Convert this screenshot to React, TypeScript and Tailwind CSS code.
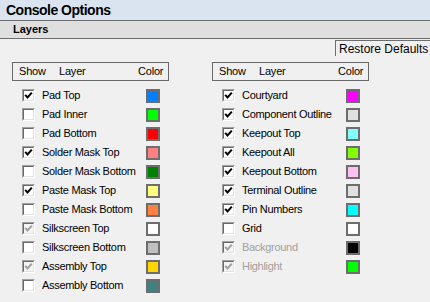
import React from 'react'

type Layer = { name: string; color: string; checked: boolean; disabled?: boolean; dim?: boolean }

const leftLayers: Layer[] = [
  { name: 'Pad Top', color: '#0080ff', checked: true },
  { name: 'Pad Inner', color: '#00ff00', checked: false },
  { name: 'Pad Bottom', color: '#ff0000', checked: false },
  { name: 'Solder Mask Top', color: '#ff8080', checked: true },
  { name: 'Solder Mask Bottom', color: '#008000', checked: false },
  { name: 'Paste Mask Top', color: '#ffff80', checked: true },
  { name: 'Paste Mask Bottom', color: '#ff8040', checked: false },
  { name: 'Silkscreen Top', color: '#ffffff', checked: true, disabled: true },
  { name: 'Silkscreen Bottom', color: '#c0c0c0', checked: false },
  { name: 'Assembly Top', color: '#ffd700', checked: true, disabled: true },
  { name: 'Assembly Bottom', color: '#408080', checked: false },
]

const rightLayers: Layer[] = [
  { name: 'Courtyard', color: '#ff00ff', checked: true },
  { name: 'Component Outline', color: '#e0e0e0', checked: true },
  { name: 'Keepout Top', color: '#80ffff', checked: true },
  { name: 'Keepout All', color: '#80ff00', checked: true },
  { name: 'Keepout Bottom', color: '#ffc0f4', checked: true },
  { name: 'Terminal Outline', color: '#e0e0e0', checked: true },
  { name: 'Pin Numbers', color: '#00ffff', checked: true },
  { name: 'Grid', color: '#ffffff', checked: false },
  { name: 'Background', color: '#000000', checked: true, disabled: true, dim: true },
  { name: 'Highlight', color: '#00ff00', checked: true, disabled: true, dim: true },
]

function CheckBox({ checked, disabled }: { checked: boolean; disabled?: boolean }) {
  return (
    <span className="flex h-[13px] w-[13px] border-t border-l border-b border-r border-t-[#a0a0a0] border-l-[#a0a0a0] border-b-white border-r-white">
      <span
        className={`flex h-full w-full items-center justify-center border-t border-l border-t-[#696969] border-l-[#696969] border-b border-r border-b-[#e3e3e3] border-r-[#e3e3e3] ${
          disabled ? 'bg-[#f4f4f4]' : 'bg-white'
        }`}
      >
        {checked && (
          <svg width="9" height="9" viewBox="0 0 9 9">
            <path
              d="M1.2 3.8 L3.5 6.4 L7.8 1.6"
              fill="none"
              stroke={disabled ? '#a0a0a0' : '#000000'}
              strokeWidth="2"
            />
          </svg>
        )}
      </span>
    </span>
  )
}

function LayerColumn({ layers }: { layers: Layer[] }) {
  return (
    <div className="flex w-[157px] flex-col">
      <div className="flex h-[19px] items-center border border-[#696969] text-[11px] tracking-[-0.2px] text-black">
        <span className="ml-[6px] w-[40px]">Show</span>
        <span className="w-[79px]">Layer</span>
        <span>Color</span>
      </div>
      <div className="mt-[5px] flex flex-col">
        {layers.map((l) => (
          <div key={l.name} className="flex h-[19px] items-center">
            <span className="ml-[10px]">
              <CheckBox checked={l.checked} disabled={l.disabled} />
            </span>
            <span
              className={`ml-[7px] w-[104px] text-[11px] tracking-[-0.3px] ${l.dim ? 'text-[#a0a0a0]' : 'text-black'}`}
            >
              {l.name}
            </span>
            <span className="h-[14px] w-[14px] border-2 border-[#6d6d6d]" style={{ backgroundColor: l.color }} />
          </div>
        ))}
      </div>
    </div>
  )
}

export default function App() {
  return (
    <div className="flex h-[302px] w-[430px] flex-col overflow-hidden bg-[#f0f0f0] font-['Liberation_Sans',Arial,sans-serif]">
      <div className="flex h-[21px] items-center border-b border-[#6d6d6d] bg-[#dae4f1] pl-[6px] text-[14px] font-bold tracking-[-0.5px] text-black">
        Console Options
      </div>
      <div className="flex h-[18px] items-center border-b border-[#6d6d6d] bg-[#dfdfdf] pl-[13px] text-[11px] font-bold text-black">
        Layers
      </div>
      <div className="mt-[1px] flex justify-end">
        <button className="h-[16px] w-[95px] border-t border-l border-[#6d6d6d] pl-[3px] text-left text-[12px] leading-[14px] text-black">
          Restore Defaults
        </button>
      </div>
      <div className="mt-[6px] flex gap-[43px] pl-[12px]">
        <LayerColumn layers={leftLayers} />
        <LayerColumn layers={rightLayers} />
      </div>
    </div>
  )
}
